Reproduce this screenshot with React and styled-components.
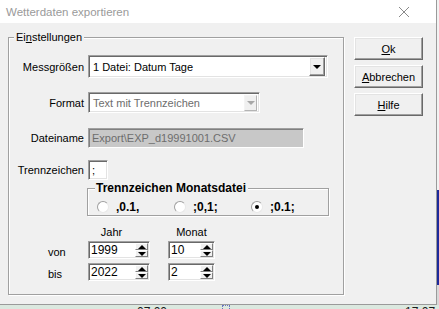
import React from "react";
import styled, { createGlobalStyle, css } from "styled-components";

const GlobalStyle = createGlobalStyle`
  html, body {
    margin: 0;
    padding: 0;
  }
  body {
    width: 439px;
    height: 309px;
    overflow: hidden;
    background: #dfe9e3;
    font-family: "Liberation Sans", Arial, sans-serif;
    font-size: 11px;
    color: #000;
  }
`;

const sunken = css`
  border: 1px solid;
  border-color: #a0a0a0 #ffffff #ffffff #a0a0a0;
  box-shadow: inset 1px 1px 0 #696969, inset -1px -1px 0 #e3e3e3;
`;

const raised = css`
  border: 1px solid;
  border-color: #ffffff #696969 #696969 #ffffff;
  box-shadow: inset -1px -1px 0 #a0a0a0, inset 1px 1px 0 #e3e3e3;
`;

const Screen = styled.div`
  display: flex;
  flex-direction: column;
  width: 439px;
  height: 309px;
  overflow: hidden;
`;

const TopRow = styled.div`
  display: flex;
`;

const Dialog = styled.div`
  box-sizing: border-box;
  width: 437px;
  height: 305px;
  display: flex;
  flex-direction: column;
  background: #f0f0f0;
  border-right: 1px solid #9a9a9a;
  border-bottom: 1px solid #9a9a9a;
`;

const SideStrip = styled.div`
  width: 2px;
  height: 305px;
  background: linear-gradient(
    to bottom,
    #f2f2f2 0 190px,
    #1d2a9a 190px 285px,
    #d8d8d8 285px
  );
`;

const TitleBar = styled.div`
  height: 23px;
  flex: none;
  display: flex;
  align-items: center;
  justify-content: space-between;
  padding: 0 26px 0 6px;
  background: #ffffff;
  color: #9a9a9a;
  font-size: 11.5px;
`;

const Body = styled.div`
  flex: 1;
  display: flex;
  align-items: flex-start;
  padding: 14px 0 0 8px;
`;

const Group = styled.div`
  position: relative;
  box-sizing: border-box;
  width: 336px;
  height: 258px;
  border: 1px solid #a0a0a0;
  box-shadow: inset 1px 1px 0 #ffffff, 1px 1px 0 #ffffff;
  padding-top: 17px;
  display: flex;
  flex-direction: column;
`;

const Legend = styled.span`
  position: absolute;
  top: -7px;
  left: 5px;
  padding: 0 2px;
  background: #f0f0f0;
  line-height: 13px;
  font-weight: ${(p) => (p.$bold ? 700 : 400)};
  font-size: ${(p) => (p.$bold ? "12px" : "11px")};
  ${(p) => p.$bold && "top: -8px; line-height: 14px; left: 7px; padding: 0 2px 0 1px;"}
`;

const FieldRow = styled.div`
  display: flex;
  align-items: center;
  margin-top: ${(p) => p.$top || 0}px;
`;

const Label = styled.div`
  width: 75px;
  margin-right: 4px;
  text-align: right;
`;

const Combo = styled.div`
  box-sizing: border-box;
  width: ${(p) => p.$w}px;
  height: ${(p) => p.$h}px;
  display: flex;
  align-items: center;
  background: #ffffff;
  ${sunken};
  color: ${(p) => (p.$disabled ? "#6d6d6d" : "#000")};
  padding-left: 4px;
  padding-right: 2px;
`;

const DropButton = styled.div`
  box-sizing: border-box;
  margin-left: auto;
  width: ${(p) => (p.$disabled ? 13 : 16)}px;
  height: ${(p) => (p.$disabled ? 16 : 19)}px;
  display: flex;
  align-items: center;
  justify-content: center;
  background: #f0f0f0;
  ${(p) =>
    p.$disabled
      ? "border: 1px solid; border-color: #f4f4f4 #b4b4b4 #b4b4b4 #f4f4f4;"
      : raised};

  &::after {
    content: "";
    width: 0;
    height: 0;
    border-left: 4px solid transparent;
    border-right: 4px solid transparent;
    border-top: 4px solid ${(p) => (p.$disabled ? "#a8a8a8" : "#000")};
  }
`;

const ReadOnlyField = styled.div`
  box-sizing: border-box;
  width: 216px;
  height: 20px;
  display: flex;
  align-items: center;
  padding-left: 3px;
  background: #c8c8c8;
  color: #6d6d6d;
  border: 1px solid;
  border-color: #a0a0a0 #ffffff #ffffff #a0a0a0;
  box-shadow: inset 1px 1px 0 #808080;
`;

const TextBox = styled.div`
  box-sizing: border-box;
  width: 20px;
  height: 20px;
  display: flex;
  align-items: center;
  padding-left: 3px;
  background: #ffffff;
  ${sunken};
`;

const SubGroup = styled.div`
  position: relative;
  box-sizing: border-box;
  width: 242px;
  height: 28px;
  margin: 8px 0 0 78px;
  border: 1px solid #a0a0a0;
  box-shadow: inset 1px 1px 0 #ffffff, 1px 1px 0 #ffffff;
  display: flex;
  padding: 10px 0 0 9px;
`;

const RadioItem = styled.div`
  width: 78px;
  display: flex;
  align-items: center;
  gap: 7px;
  font-weight: 700;
  font-size: 12px;
  line-height: 13px;
`;

const RadioDot = styled.span`
  box-sizing: border-box;
  width: 12px;
  height: 12px;
  border-radius: 50%;
  border: 1px solid;
  border-color: #a0a0a0 #e8e8e8 #e8e8e8 #a0a0a0;
  background: #ffffff;
  display: flex;
  align-items: center;
  justify-content: center;

  &::after {
    content: "";
    width: 4px;
    height: 4px;
    border-radius: 50%;
    background: ${(p) => (p.$checked ? "#000" : "transparent")};
  }
`;

const HeadRow = styled.div`
  display: flex;
  margin: 10px 0 0 79px;
  line-height: 13px;
`;

const HeadCell = styled.div`
  width: ${(p) => p.$w}px;
  margin-right: ${(p) => p.$gap || 0}px;
  text-align: center;
`;

const SpinRow = styled.div`
  display: flex;
  align-items: center;
  margin: ${(p) => p.$top}px 0 0 39px;
`;

const SpinLabel = styled.div`
  width: 40px;
  padding-top: 4px;
`;

const SpinBox = styled.div`
  box-sizing: border-box;
  width: ${(p) => p.$w}px;
  height: 18px;
  margin-right: ${(p) => p.$gap || 0}px;
  display: flex;
  align-items: center;
  padding: 0 1px 0 2px;
  background: #ffffff;
  ${sunken};
  font-size: 12px;
`;

const SpinButtons = styled.div`
  margin-left: auto;
  display: flex;
  flex-direction: column;
  width: 13px;
`;

const SpinBtn = styled.div`
  box-sizing: border-box;
  height: 7px;
  display: flex;
  align-items: center;
  justify-content: center;
  background: #f0f0f0;
  border: 1px solid;
  border-color: #ffffff #808080 #808080 #ffffff;

  &::after {
    content: "";
    width: 0;
    height: 0;
    border-left: 4px solid transparent;
    border-right: 4px solid transparent;
    ${(p) =>
      p.$up ? "border-bottom: 4px solid #000;" : "border-top: 4px solid #000;"}
  }
`;

const ButtonColumn = styled.div`
  display: flex;
  flex-direction: column;
  gap: 5px;
  margin-left: 10px;
`;

const Button = styled.div`
  box-sizing: border-box;
  width: 69px;
  height: 23px;
  display: flex;
  align-items: center;
  justify-content: center;
  background: #f0f0f0;
  ${raised};
  font-size: 11px;
`;

const BottomStrip = styled.div`
  flex: 1;
  display: flex;
  align-items: flex-start;
  background: #dbe8df;
  font-size: 12px;
  line-height: 12px;
  color: #1a1a1a;
  overflow: hidden;
`;

const StripText = styled.span`
  margin-left: ${(p) => p.$left}px;
  padding-top: 1px;
  color: ${(p) => p.$color || "#1a1a1a"};
`;

const StripMark = styled.span`
  width: 6px;
  height: 3px;
  margin-left: ${(p) => p.$left}px;
  border: 1px dotted #6a74c0;
  border-bottom: none;
`;

function Spinner({ value, width, gap }) {
  return (
    <SpinBox $w={width} $gap={gap}>
      {value}
      <SpinButtons>
        <SpinBtn $up />
        <SpinBtn />
      </SpinButtons>
    </SpinBox>
  );
}

export default function App() {
  return (
    <>
      <GlobalStyle />
      <Screen>
        <TopRow>
          <Dialog>
            <TitleBar>
              <span>Wetterdaten exportieren</span>
              <svg width="12" height="12" viewBox="0 0 12 12">
                <path d="M1 1 L11 11 M11 1 L1 11" stroke="#8a8a8a" strokeWidth="1" />
              </svg>
            </TitleBar>
            <Body>
              <Group>
                <Legend>
                  Ei<u>n</u>stellungen
                </Legend>
                <FieldRow>
                  <Label>Messgrößen</Label>
                  <Combo $w={240} $h={23}>
                    1 Datei: Datum Tage
                    <DropButton />
                  </Combo>
                </FieldRow>
                <FieldRow $top={14}>
                  <Label>Format</Label>
                  <Combo $w={172} $h={21} $disabled>
                    Text mit Trennzeichen
                    <DropButton $disabled />
                  </Combo>
                </FieldRow>
                <FieldRow $top={15}>
                  <Label>Dateiname</Label>
                  <ReadOnlyField>{"Export\\EXP_d19991001.CSV"}</ReadOnlyField>
                </FieldRow>
                <FieldRow $top={12}>
                  <Label>Trennzeichen</Label>
                  <TextBox>;</TextBox>
                </FieldRow>
                <SubGroup>
                  <Legend $bold>Trennzeichen Monatsdatei</Legend>
                  <RadioItem>
                    <RadioDot />
                    ,0.1,
                  </RadioItem>
                  <RadioItem>
                    <RadioDot />
                    ;0,1;
                  </RadioItem>
                  <RadioItem>
                    <RadioDot $checked />
                    ;0.1;
                  </RadioItem>
                </SubGroup>
                <HeadRow>
                  <HeadCell $w={47} $gap={33}>Jahr</HeadCell>
                  <HeadCell $w={47}>Monat</HeadCell>
                </HeadRow>
                <SpinRow $top={2}>
                  <SpinLabel>von</SpinLabel>
                  <Spinner value="1999" width={62} gap={18} />
                  <Spinner value="10" width={47} />
                </SpinRow>
                <SpinRow $top={4}>
                  <SpinLabel>bis</SpinLabel>
                  <Spinner value="2022" width={62} gap={18} />
                  <Spinner value="2" width={47} />
                </SpinRow>
              </Group>
              <ButtonColumn>
                <Button>
                  <u>O</u>k
                </Button>
                <Button>
                  <u>A</u>bbrechen
                </Button>
                <Button>
                  <u>H</u>ilfe
                </Button>
              </ButtonColumn>
            </Body>
          </Dialog>
          <SideStrip />
        </TopRow>
        <BottomStrip>
          <StripText $left={137}>07:00</StripText>
          <StripText $left={0} $color="#e8c640">☼</StripText>
          <StripMark $left={44} />
          <StripText $left={175}>17:07</StripText>
        </BottomStrip>
      </Screen>
    </>
  );
}
